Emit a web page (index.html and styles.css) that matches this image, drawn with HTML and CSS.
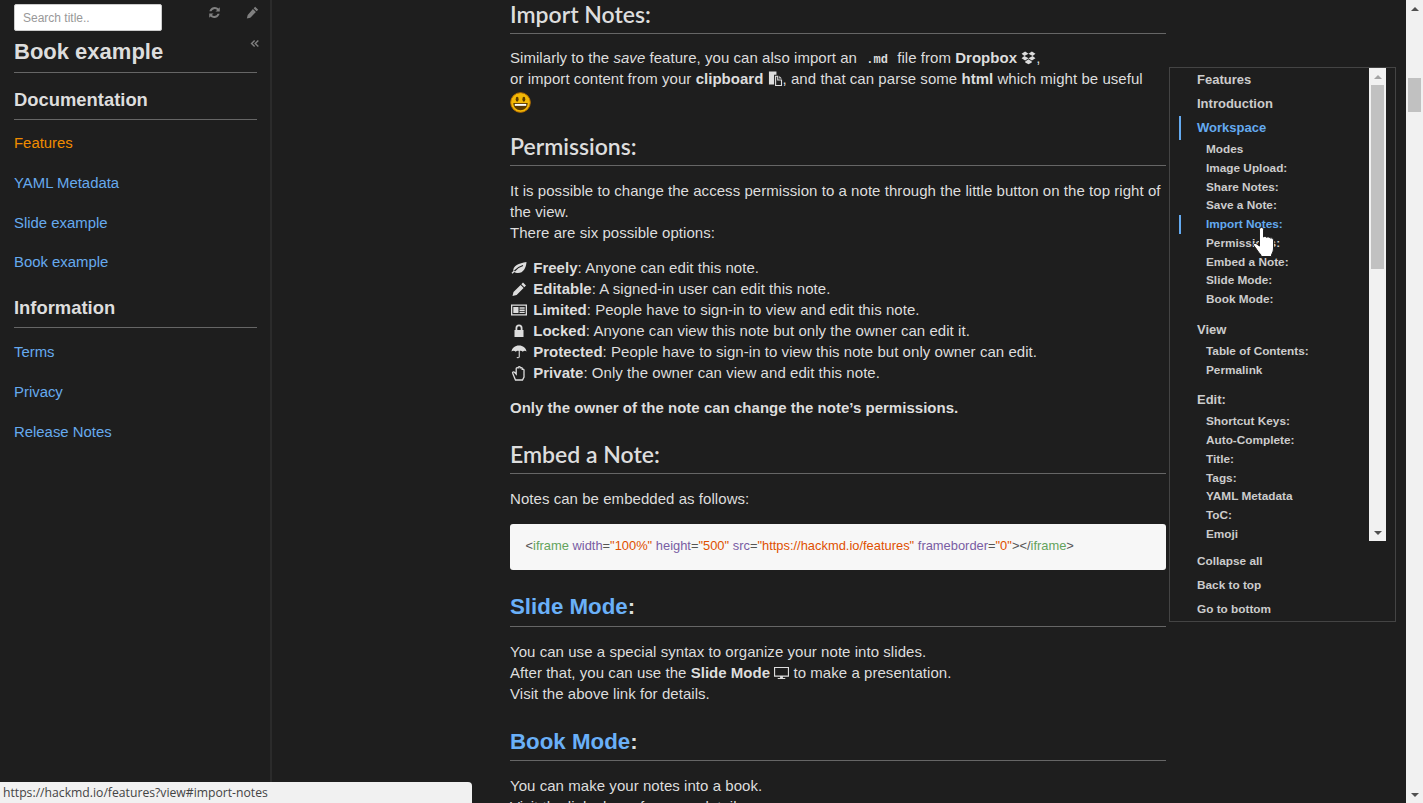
FILE: index.html
```html
<!DOCTYPE html>
<html lang="en">
<head>
    <meta charset="UTF-8">
    <meta name="viewport" content="width=device-width, initial-scale=1.0">
    <title>Features - HackMD</title>
    <link rel="stylesheet" href="styles.css">
</head>
<body>
    <div class="page">
        <!-- book sidebar -->
        <aside class="sidebar">
            <div class="side-top">
                <input class="search" type="text" placeholder="Search title..">
                <span class="side-tools">
                    <svg class="tool" viewBox="0 0 16 16"><path d="M14.500 1.500v5.300H9.200l2-2A4.300 4.300 0 0 0 4.300 6.600H1.700a7 7 0 0 1 11.300-3.600zM1.500 14.500V9.200h5.300l-2 2a4.300 4.300 0 0 0 6.900-1.800h2.600A7 7 0 0 1 3 13z"/></svg>
                    <svg class="tool" viewBox="0 0 16 16"><path d="M11.300 1l3.700 3.700-1.900 1.900-3.700-3.700zM8.500 3.800l3.700 3.700-6.900 6.900L1 15.500l1.100-4.500z"/></svg>
                </span>
            </div>
            <div class="collapse-row">
                <svg class="collapse" viewBox="0 0 10 10"><path d="M4.600 1L.6 5l4 4 1.100-1.100L2.800 5l2.900-2.900zM8.700 1l-4 4 4 4 1.100-1.100L6.900 5l2.900-2.900z"/></svg>
            </div>
            <h1 class="book-title">Book example</h1>
            <h2 class="side-head">Documentation</h2>
            <a class="side-link current" href="#">Features</a>
            <a class="side-link" href="#">YAML Metadata</a>
            <a class="side-link" href="#">Slide example</a>
            <a class="side-link" href="#">Book example</a>
            <h2 class="side-head second">Information</h2>
            <a class="side-link" href="#">Terms</a>
            <a class="side-link" href="#">Privacy</a>
            <a class="side-link" href="#">Release Notes</a>
        </aside>

        <!-- note content -->
        <main class="main">
            <article class="note">
                <h3>Import Notes:</h3>
                <p>Similarly to the <em>save</em> feature, you can also import an <code>.md</code> file from <strong>Dropbox</strong> <svg class="ico" viewBox="0 0 16 16"><path d="M4.400 1.500L.6 4l3 2.400L8 3.900zM11.600 1.500L8 3.900l4.400 2.500 3-2.400zM3.600 6.400L.6 8.900l3.800 2.400L8 8.900zM12.400 6.400L8 8.900l3.600 2.400 3.800-2.400zM4.500 12.200v1l3.500 2 3.500-2v-1L8 9.900z"/></svg>,<br>or import content from your <strong>clipboard</strong> <svg class="ico" viewBox="0 0 16 16"><path fill-rule="evenodd" d="M1 .5h8v3.500H6.500v10.500H1zM7.500 5H11v4h4v7H7.500zM8.700 6.200v8.600h5.100v-4.600h-4V6.200zM12 5.200L14.800 8H12z"/></svg>, and that can parse some <strong>html</strong> which might be useful<br>
                <svg class="emoji" viewBox="0 0 22 22"><circle cx="11" cy="11" r="10.300" fill="#f2b705" stroke="#b86e00"/><ellipse cx="7.500" cy="7.500" rx="1.500" ry="2.600" fill="#5a3a00"/><ellipse cx="14.500" cy="7.500" rx="1.500" ry="2.600" fill="#5a3a00"/><path d="M3.500 11.500h15c0 4.500-3.400 7.500-7.500 7.500s-7.500-3-7.500-7.500z" fill="#5a3a00"/><path d="M5 12.500h12v2H5z" fill="#fff"/></svg></p>

                <h3>Permissions:</h3>
                <p>It is possible to change the access permission to a note through the little button on the top right of the view.<br>There are six possible options:</p>
                <p>
                    <svg class="perm" viewBox="0 0 16 16"><path d="M15.500 2C15 8 12.500 13 7 13c-1.500 0-2.800-.4-3.700-1l-1.800 1.800-1-1L2.400 11C1.500 6 8 3 15.500 2z"/><path d="M3.500 11C6 8 8.500 6.500 12 5.500" fill="none" stroke="#1e1e1e" stroke-width="1.200"/></svg> <strong>Freely</strong>: Anyone can edit this note.<br>
                    <svg class="perm" viewBox="0 0 16 16"><path d="M12 1.500l3 3-1.700 1.700-3-3zM9.600 3.900l3 3-7 7-4.100 1 1-4z"/></svg> <strong>Editable</strong>: A signed-in user can edit this note.<br>
                    <svg class="perm" viewBox="0 0 16 16"><path fill-rule="evenodd" d="M0 2.500h16v11H0zM1.300 3.800v8.400h13.400V3.800zM2.300 5h5.200v6H2.300zM8.500 5.300h5.200v1.400H8.500zM8.500 7.600h5.200V9H8.500zM8.500 9.800h5.200v1.200H8.500z"/></svg> <strong>Limited</strong>: People have to sign-in to view and edit this note.<br>
                    <svg class="perm" viewBox="0 0 16 16"><path fill-rule="evenodd" d="M4.500 7V5a3.500 3.500 0 0 1 7 0v2h1v7h-9V7zM6.300 7h3.400V5a1.700 1.700 0 0 0-3.400 0z"/></svg> <strong>Locked</strong>: Anyone can view this note but only the owner can edit it.<br>
                    <svg class="perm" viewBox="0 0 16 16"><path d="M8 1.500c4 0 7 2.500 7.500 6-1.200-1-2.500-1-3.700.2-1-1-2-1.200-3-.8v5.600c0 2-2.800 2.300-3.300.4h1.200c.2.800 1 .6 1-.3V6.900c-1-.4-2-.2-3 .8C3.500 6.500 1.700 6.500.5 7.500 1 4 4 1.500 8 1.500z"/></svg> <strong>Protected</strong>: People have to sign-in to view this note but only owner can edit.<br>
                    <svg class="perm" viewBox="0 0 16 16"><path fill="none" stroke="currentColor" stroke-width="1.300" d="M4.500 15h7l1.500-3V5c0-1.300-1.800-1.300-1.800 0V3.500c0-1.300-2-1.300-2 0V2.500c0-1.300-2-1.300-2 0v1c0-1.200-2-1.200-2 0V9L3.500 7.200C2.500 6.300 1 7.300 1.800 8.500z"/></svg> <strong>Private</strong>: Only the owner can view and edit this note.
                </p>
                <p><strong>Only the owner of the note can change the note’s permissions.</strong></p>

                <h3>Embed a Note:</h3>
                <p class="before-code">Notes can be embedded as follows:</p>
                <pre class="code"><span class="c-p">&lt;</span><span class="c-t">iframe</span> <span class="c-a">width</span><span class="c-p">=</span><span class="c-s">"100%"</span> <span class="c-a">height</span><span class="c-p">=</span><span class="c-s">"500"</span> <span class="c-a">src</span><span class="c-p">=</span><span class="c-s">"https://hackmd.io/features"</span> <span class="c-a">frameborder</span><span class="c-p">=</span><span class="c-s">"0"</span><span class="c-p">&gt;&lt;/</span><span class="c-t">iframe</span><span class="c-p">&gt;</span></pre>

                <h3 class="link-head"><a href="#">Slide Mode</a>:</h3>
                <p>You can use a special syntax to organize your note into slides.<br>After that, you can use the <strong>Slide Mode</strong> <svg class="ico" viewBox="0 0 16 16"><path fill-rule="evenodd" d="M0 2h16v10.500H9.500v1.300H12V15H4v-1.200h2.500v-1.300H0zM1.200 3.200v8.100h13.600V3.200z"/></svg> to make a presentation.<br>Visit the above link for details.</p>

                <h3 class="link-head"><a href="#">Book Mode</a>:</h3>
                <p>You can make your notes into a book.<br>Visit the link above for more details.</p>
            </article>
        </main>

        <div class="page-scroll">
            <span class="arrow page-up"></span>
            <span class="page-thumb"></span>
            <span class="arrow page-down"></span>
        </div>

        <!-- floating table of contents -->
        <nav class="toc">
            <div class="toc-list">
                <div class="toc-items">
                    <a class="toc-top" href="#">Features</a>
                    <a class="toc-top" href="#">Introduction</a>
                    <a class="toc-top active" href="#">Workspace</a>
                    <a class="toc-sub" href="#">Modes</a>
                    <a class="toc-sub" href="#">Image Upload:</a>
                    <a class="toc-sub" href="#">Share Notes:</a>
                    <a class="toc-sub" href="#">Save a Note:</a>
                    <a class="toc-sub active" href="#">Import Notes:</a>
                    <a class="toc-sub" href="#">Permissions:</a>
                    <a class="toc-sub" href="#">Embed a Note:</a>
                    <a class="toc-sub" href="#">Slide Mode:</a>
                    <a class="toc-sub" href="#">Book Mode:</a>
                    <a class="toc-top gap" href="#">View</a>
                    <a class="toc-sub" href="#">Table of Contents:</a>
                    <a class="toc-sub" href="#">Permalink</a>
                    <a class="toc-top gap" href="#">Edit:</a>
                    <a class="toc-sub" href="#">Shortcut Keys:</a>
                    <a class="toc-sub" href="#">Auto-Complete:</a>
                    <a class="toc-sub" href="#">Title:</a>
                    <a class="toc-sub" href="#">Tags:</a>
                    <a class="toc-sub" href="#">YAML Metadata</a>
                    <a class="toc-sub" href="#">ToC:</a>
                    <a class="toc-sub" href="#">Emoji</a>
                </div>
                <div class="toc-scroll">
                    <span class="arrow up"></span>
                    <span class="toc-thumb"></span>
                    <span class="arrow down"></span>
                </div>
            </div>
            <div class="toc-foot">
                <a href="#">Collapse all</a>
                <a href="#">Back to top</a>
                <a href="#">Go to bottom</a>
            </div>
        </nav>

        <svg class="cursor" viewBox="0 0 23 30"><path d="M8.500.5c1.200 0 2 .8 2 2V10c.7-.8 2.600-.7 3.200.4.800-.7 2.800-.6 3.300.7.800-.5 3.500-.4 3.500 2V21c0 3-1 5-2 6.500v2H8v-1.500C5 25 3 21 .8 18.500c-1-1.500.8-3 2.400-1.800L6.500 19V2.500c0-1.200.8-2 2-2z" fill="#fff" stroke="#222" stroke-width="1"/></svg>

        <div class="status">https://hackmd.io/features?view#import-notes</div>
    </div>
</body>
</html>
```

FILE: styles.css
```css
* {
    margin: 0;
    padding: 0;
    box-sizing: border-box;
}

html,
body {
    height: 100%;
    overflow: hidden;
}

body {
    background-color: #1e1e1e;
    color: #dddddd;
    font-family: "Liberation Sans", Arial, sans-serif;
    font-size: 15px;
}

a {
    color: #66aaee;
    text-decoration: none;
}

.page {
    position: relative;
    display: flex;
    height: 803px;
}

/* 左侧目录 */
.sidebar {
    width: 272px;
    flex-shrink: 0;
    padding: 4px 13px 0 14px;
    border-right: 2px solid #2b2b2b;
}

.side-top {
    display: flex;
    align-items: flex-start;
    justify-content: space-between;
    height: 27px;
}

.search {
    width: 148px;
    height: 27px;
    padding: 0 8px;
    border: 1px solid #cccccc;
    border-radius: 2px;
    background-color: #ffffff;
    font-family: inherit;
    font-size: 12px;
}

.search::placeholder {
    color: #999999;
}

.side-tools {
    display: flex;
    gap: 25px;
    margin: 2px -2px 0 0;
}

.tool {
    width: 13px;
    height: 13px;
    fill: #808080;
}

.collapse-row {
    display: flex;
    justify-content: flex-end;
    height: 0;
}

.collapse {
    width: 9px;
    height: 9px;
    margin: 8px -2px 0 0;
    fill: #808080;
}

.book-title {
    margin-top: 8px;
    padding-bottom: 7px;
    border-bottom: 1px solid #666666;
    font-size: 22px;
    line-height: 26px;
}

.side-head {
    margin-top: 16px;
    margin-bottom: 13px;
    padding-bottom: 9px;
    border-bottom: 1px solid #666666;
    font-size: 18.400px;
    line-height: 21px;
}

.side-head.second {
    margin-top: 5px;
    margin-bottom: 14px;
}

.side-link {
    display: block;
    height: 39.750px;
    font-size: 14.900px;
    line-height: 20px;
}

.side-link.current {
    color: #f08c00;
}

/* 正文 */
.main {
    flex: 1;
    min-width: 0;
    padding-left: 238px;
    overflow: hidden;
}

.note {
    width: 656px;
    letter-spacing: 0.05px;
    line-height: 21px;
}

.note h3 {
    margin-bottom: 13.500px;
    padding-bottom: 4px;
    border-bottom: 1px solid #666666;
    font-family: Lato, "Noto Sans", sans-serif;
    font-size: 23px;
    font-weight: 600;
    letter-spacing: 0;
    line-height: 29px;
}

.note h3:first-child {
    margin-bottom: 13px;
}

.note p {
    margin-bottom: 14px;
}

.note p.before-code {
    margin-bottom: 15px;
    padding-top: 1px;
}

.note p + h3,
.note pre + h3 {
    margin-top: 22px;
}

.note strong {
    font-weight: bold;
    letter-spacing: 0.02px;
}

.note code {
    padding: 0 5px;
    font-family: "Liberation Mono", monospace;
    font-size: 12px;
    font-weight: bold;
    line-height: 1;
}

.ico {
    width: 15px;
    height: 15px;
    vertical-align: -2px;
    fill: #dddddd;
}

.perm {
    width: 16px;
    height: 16px;
    margin: 0 2px 0 1px;
    vertical-align: -3px;
    fill: #dddddd;
    color: #dddddd;
}

/* 笑脸比行高大，用负margin抵消多出的部分 */
.emoji {
    width: 21px;
    height: 21px;
    margin-bottom: -3px;
    vertical-align: -5px;
}

.note .link-head {
    margin-bottom: 14px;
    padding-bottom: 4.500px;
    font-family: "Liberation Sans", Arial, sans-serif;
    font-size: 22.300px;
    font-weight: bold;
}

.note p + h3.link-head {
    margin-top: 23px;
}

.link-head a {
    color: #6ab0f8;
}

.code {
    height: 46px;
    padding: 14px 15.500px;
    border-radius: 3px;
    background-color: #f7f7f7;
    color: #555555;
    font-family: "Liberation Sans", Arial, sans-serif;
    font-size: 12.900px;
    letter-spacing: 0;
    line-height: 15px;
    white-space: pre;
}

.c-t { color: #63a35c; }
.c-a { color: #795da3; }
.c-s { color: #df5000; }
.c-p { color: #555555; }

/* 页面滚动条 */
.page-scroll {
    position: relative;
    width: 17px;
    flex-shrink: 0;
    padding: 78px 2px 0;
    background-color: #f1f1f1;
}

.page-thumb {
    display: block;
    height: 34px;
    background-color: #c1c1c1;
}

/* 浮动 toc */
.toc {
    position: absolute;
    top: 67px;
    left: 1169px;
    width: 227px;
    height: 555px;
    border: 1px solid #444444;
    background-color: #1e1e1e;
}

.toc-list {
    display: flex;
    height: 473px;
}

.toc-items {
    flex: 1;
    min-width: 0;
    padding-left: 9px;
    overflow: hidden;
}

.toc-items a {
    display: block;
    border-left: 2px solid transparent;
    color: #cccccc;
    font-weight: bold;
}

.toc-top {
    height: 24px;
    padding-left: 16px;
    font-size: 13px;
    line-height: 24px;
}

.toc-top.gap {
    margin-top: 9px;
}

.toc-sub {
    height: 18.750px;
    padding-left: 25px;
    font-size: 11.800px;
    line-height: 19px;
}

.toc-items a.active {
    border-left-color: #64aaf0;
    color: #64aaf0;
}

.toc-scroll {
    position: relative;
    width: 17px;
    margin-right: 9px;
    padding-top: 17px;
    background-color: #f1f1f1;
}

.toc-thumb {
    display: block;
    height: 184px;
    margin: 0 2px;
    background-color: #c1c1c1;
}

.arrow {
    position: absolute;
    left: 5px;
    border-left: 4px solid transparent;
    border-right: 4px solid transparent;
}

.arrow.up {
    top: 7px;
    border-bottom: 4px solid #a3a3a3;
}

.arrow.down {
    bottom: 6px;
    border-top: 4px solid #505050;
}

.arrow.page-up {
    top: 7px;
    border-bottom: 4px solid #505050;
}

.arrow.page-down {
    bottom: 6px;
    border-top: 4px solid #505050;
}

.toc-foot {
    padding: 8px 0 0 27px;
}

.toc-foot a {
    display: block;
    height: 24px;
    color: #cccccc;
    font-size: 11.800px;
    font-weight: bold;
    line-height: 24px;
}

.cursor {
    position: absolute;
    top: 227px;
    left: 1253px;
    width: 23px;
    height: 30px;
}

.status {
    position: absolute;
    left: 0;
    bottom: 0;
    width: 472px;
    height: 21px;
    padding-left: 3px;
    border-top-right-radius: 4px;
    background-color: #f1f1f1;
    color: #444444;
    font-family: "Open Sans", "Noto Sans", sans-serif;
    font-size: 12.200px;
    line-height: 21px;
}
```
